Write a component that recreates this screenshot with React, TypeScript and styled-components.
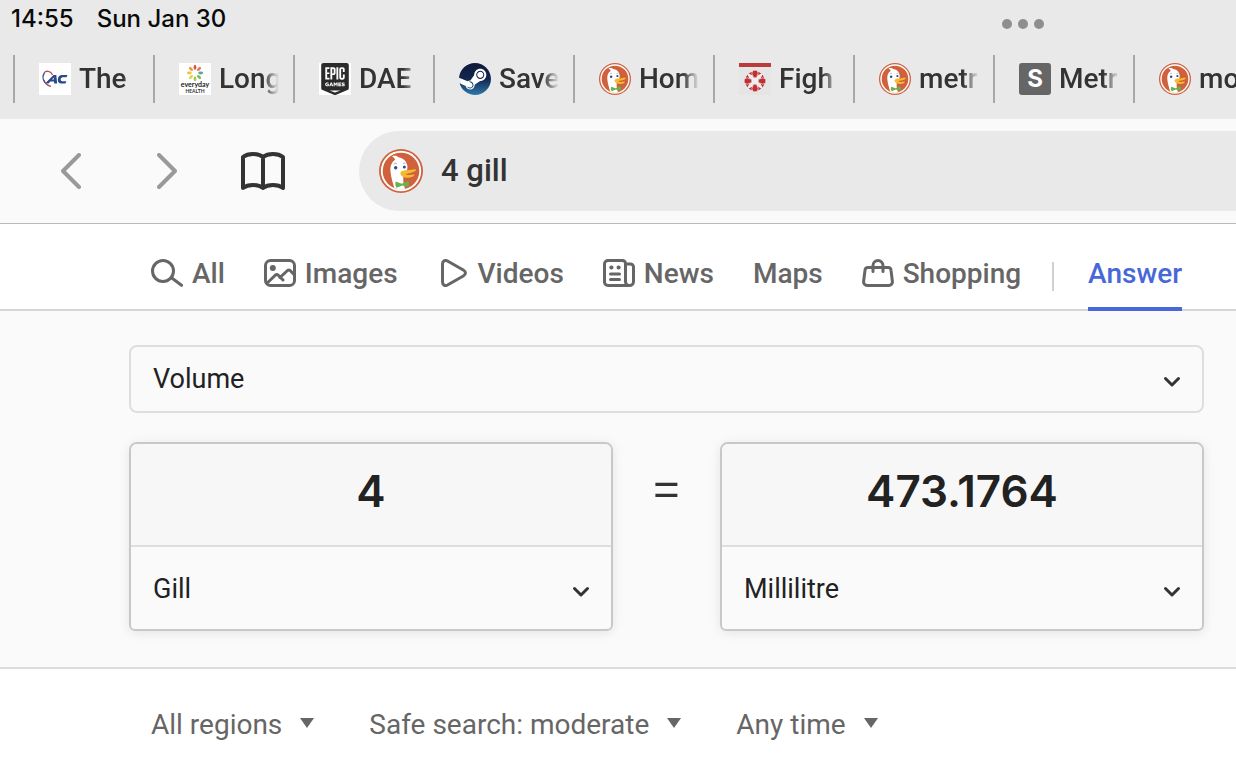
import React, { useId } from 'react';
import styled, { createGlobalStyle, css } from 'styled-components';
import { SiEpicgames, SiSteam } from 'react-icons/si';

const GlobalStyle = createGlobalStyle`
  *, *::before, *::after { box-sizing: border-box; }
  body {
    margin: 0;
    background: #fff;
    color: #333;
    font-family: Roboto, "Liberation Sans", sans-serif;
    overflow-x: hidden;
  }
  button, input, select { margin: 0; font: inherit; color: inherit; }
`;

/* ---------- Browser chrome ---------- */

const Header = styled.header`
  background: #e9e9e9;
  padding-bottom: 16px;
`;

const StatusBar = styled.div`
  display: flex;
  align-items: center;
  gap: 23px;
  height: 38px;
  margin-bottom: 17px;
  padding: 0 192px 0 11px;
  color: #0a0a0a;
  font: 500 24px/38px Inter, "Liberation Sans", sans-serif;
`;

const DotsButton = styled.button`
  display: flex;
  gap: 6px;
  margin-left: auto;
  padding: 10px 0 0;
  border: 0;
  background: none;
`;

const Dot = styled.span`
  width: 10px;
  height: 10px;
  border-radius: 50%;
  background: #8e8e8e;
`;

const TabStrip = styled.nav`
  display: flex;
  padding-left: 13px;
  overflow: hidden;
`;

const Tab = styled.a`
  display: flex;
  flex: 0 0 140px;
  min-width: 0;
  align-items: center;
  gap: 8px;
  height: 48px;
  padding: 0 14px 0 24px;
  border-left: 2px solid #a8a8a8;
  color: #333;
  font-size: 28px;
  font-weight: 500;
  text-decoration: none;

  svg { flex: none; }
`;

const TabTitle = styled.span`
  flex: 1;
  min-width: 0;
  overflow: hidden;
  line-height: 40px;
  white-space: nowrap;
  mask-image: linear-gradient(to right, #000 calc(100% - 16px), transparent);
`;

const Badge = styled.span<{ $bg: string; $radius?: number }>`
  display: flex;
  flex: none;
  align-items: center;
  justify-content: center;
  width: 32px;
  height: 32px;
  border-radius: ${p => p.$radius ?? 0}px;
  background: ${p => p.$bg};
  color: #fff;
  font: 700 24px/32px Inter, "Liberation Sans", sans-serif;
`;

const EpicMark = styled(SiEpicgames)`
  width: 32px;
  height: 32px;
  color: #2b2b2b;
`;

const SteamMark = styled(SiSteam)`
  width: 32px;
  height: 32px;
  && { fill: url(#steam-blue); }
`;

const Toolbar = styled.div`
  display: flex;
  align-items: center;
  height: 105px;
  padding-left: 23px;
  border-bottom: 1px solid #b9b9b9;
  background: #fafafa;
`;

const ToolButton = styled.button<{ $color: string }>`
  display: flex;
  flex: none;
  align-items: center;
  justify-content: center;
  width: 96px;
  height: 80px;
  padding: 0;
  border: 0;
  background: none;
  color: ${p => p.$color};
`;

const AddressBar = styled.label`
  display: flex;
  flex: 1;
  align-items: center;
  gap: 18px;
  height: 80px;
  margin-left: 48px;
  padding-left: 20px;
  border-radius: 40px 0 0 40px;
  background: #e9e9e9;
`;

const AddressInput = styled.input`
  flex: 1;
  min-width: 0;
  padding: 0;
  border: 0;
  outline: 0;
  background: none;
  font-size: 31px;
  font-weight: 500;
  line-height: 40px;
`;

/* ---------- Search page ---------- */

const SearchNav = styled.nav`
  display: flex;
  height: 87px;
  padding-left: 151px;
  border-bottom: 2px solid #d5d5d5;
  color: #666;
  font-size: 28px;
  font-weight: 500;
`;

const NavGroup = styled.div`
  display: flex;
  gap: 39px;
`;

const NavLink = styled.a<{ $active?: boolean }>`
  display: flex;
  align-items: center;
  gap: 9px;
  height: 87px;
  padding-top: 16px;
  border-bottom: 4px solid transparent;
  color: inherit;
  line-height: 40px;
  text-decoration: none;
  ${p => p.$active && css`
    border-color: #4867d9;
    color: #4867d9;
  `}

  svg { margin-bottom: 2px; }
`;

const NavRule = styled.span`
  width: 2px;
  height: 29px;
  margin: 38px 34px 0 31px;
  background: #d0d0d0;
`;

const Converter = styled.main`
  display: grid;
  gap: 29px;
  padding: 34px 32px 36px 129px;
  border-bottom: 2px solid #dcdcdc;
  background: #fafafa;
`;

const SelectShell = styled.label<{ $framed?: boolean }>`
  display: grid;
  grid-template-columns: 1fr auto;
  align-items: center;
  height: ${p => (p.$framed ? 68 : 82)}px;
  padding-top: ${p => (p.$framed ? 0 : 2)}px;
  border: ${p => (p.$framed ? '2px solid #dedede' : '0')};
  border-radius: 8px;

  svg {
    grid-area: 1 / 2;
    margin-right: 21px;
    pointer-events: none;
  }
`;

const Select = styled.select`
  grid-area: 1 / 1 / 2 / 3;
  width: 100%;
  height: 100%;
  padding: 0 44px 0 22px;
  appearance: none;
  border: 0;
  outline: 0;
  background: none;
  color: #222;
  font-size: 27px;
`;

const Equation = styled.div`
  display: grid;
  grid-template-columns: 1fr 107px 1fr;
`;

const UnitCard = styled.section`
  border: 2px solid #c8c8c8;
  border-radius: 8px 8px 6px 6px;
  box-shadow: 0 2px 12px rgba(0, 0, 0, 0.09);
  overflow: hidden;
`;

const ValueInput = styled.input`
  display: block;
  width: 100%;
  height: 103px;
  padding: 0 0 8px;
  border: 0;
  border-bottom: 2px solid #dedede;
  outline: 0;
  background: #f7f7f7;
  color: #222;
  font: 600 44px Inter, "Liberation Sans", sans-serif;
  text-align: center;
`;

const Equals = styled.span`
  color: #333;
  font: 300 54px/88px Inter, "Liberation Sans", sans-serif;
  text-align: center;
`;

const Filters = styled.div`
  display: flex;
  gap: 55px;
  padding: 37px 0 26px 151px;
  color: #666;
  font-size: 28px;
`;

const FilterShell = styled.label`
  display: grid;
  align-items: center;

  svg {
    grid-area: 1 / 1;
    justify-self: end;
    margin-bottom: 4px;
    pointer-events: none;
  }
`;

const FilterSelect = styled.select`
  grid-area: 1 / 1;
  height: 38px;
  padding: 0 32px 0 0;
  appearance: none;
  border: 0;
  outline: 0;
  background: none;
  line-height: 38px;
  field-sizing: content;
`;

/* ---------- Drawings ---------- */

function DuckLogo({ size }: { size: number }) {
  const clip = useId();
  return (
    <svg width={size} height={size} viewBox="0 0 44 44" aria-hidden="true">
      <clipPath id={clip}><circle cx="22" cy="22" r="18.5" /></clipPath>
      <circle cx="22" cy="22" r="22" fill="#d0613d" />
      <circle cx="22" cy="22" r="20.2" fill="#fff" />
      <circle cx="22" cy="22" r="18.3" fill="#d0613d" />
      <g clipPath={`url(#${clip})`}>
        <path d="M13 7.2c3-1 5.2-.2 6.800 1.200 4.700.5 8 4.200 8.600 8.600.4 3.500-.8 6.500-3.800 9.500-.9 4.500 0 9 2 15.500H16.200c-1.700-6-4-12.500-4.700-19-.4-5 .3-9.300 4.700-12.200-.7-1.500-1.700-2.600-3.200-3.600z" fill="#fff" />
        <path d="M21.300 24.200c.6-3 4.300-3 7.200-3 3.200 0 5.500-1.300 8.300-.9.900 1.400-2 2.700-4.700 3.400-2.500.7-5 .7-5.500 1.800 2.400 1 6 .2 8.700-.2.6 2.700-5 3.700-8.200 3.400-3-.4-5.600-1.800-5.800-4.500z" fill="#f5bb30" />
        <path d="M16.800 32.600l6 2.200 6.200-3c1.200 1.800 1.200 4.500.3 6.300l-6-1.700-5.800 2.300c-1.300-1.600-1.500-4.400-.7-6.100z" fill="#67b14f" />
        <circle cx="16.700" cy="18.800" r="1.700" fill="#2d4f8e" />
        <circle cx="25.300" cy="18" r="1.500" fill="#2d4f8e" />
        <path d="M14.800 15.300c.8-1 2-1.300 3-.8M24 14.800c.7-.7 1.600-.8 2.300-.3" stroke="#7b8bb0" strokeWidth=".8" fill="none" />
      </g>
    </svg>
  );
}

const AcLogo = () => (
  <svg width="32" height="32" viewBox="0 0 32 32" aria-hidden="true">
    <path fill="#fff" d="M0 0h32v32H0z" />
    <path d="M13.500 12C12 8 7 7 5 10M5 17c.8 3 2.800 5.500 7 6.300" fill="none" stroke="#b5505f" strokeWidth="1.300" />
    <path d="M5.500 10c-2 2.500-1.600 6.500.3 9.500" fill="none" stroke="#3d5694" strokeWidth="1.300" />
    <path d="M6 20.500L14.500 12h2.800l.9 8.500h-3l-.2-2h-3.600l-1.900 2zM13 16.500h1.800l-.1-2z" fill="#2b4a8c" />
    <path d="M28.500 12h-5.500c-2.500 0-4.200 2-4.200 4.800 0 2.500 1.200 3.700 3.400 3.700h4.200l1-2.300h-4.200c-1 0-1.500-.5-1.500-1.600 0-1.400.9-2.300 2.200-2.300h3.700z" fill="#2b4a8c" />
  </svg>
);

const petals = ['#d9534a', '#e9775a', '#5aa7a0', '#7fb857', '#a6c84c', '#d8d84a', '#f0c541', '#ee9a3c'];

const HealthLogo = () => (
  <svg width="32" height="32" viewBox="0 0 32 32" aria-hidden="true">
    <path fill="#fff" d="M0 0h32v32H0z" />
    {petals.map((c, i) => (
      <ellipse key={c} cx="16" cy="4.300" rx="1.400" ry="2.500" fill={c} transform={`rotate(${i * 45} 16 10)`} />
    ))}
    <text x="16" y="24" fontFamily="Lato, sans-serif" fontWeight="700" fontSize="7" textAnchor="middle" fill="#222">everyday</text>
    <text x="16" y="30" fontFamily="Lato, sans-serif" fontWeight="700" fontSize="5" textAnchor="middle" fill="#333">HEALTH</text>
  </svg>
);

const GearLogo = () => (
  <svg width="32" height="32" viewBox="0 0 32 32" aria-hidden="true">
    <path fill="#e5e5e5" d="M0 0h32v32H0z" />
    <path fill="#bb3a3a" d="M0 0h32v4H0z" />
    <circle cx="16" cy="18" r="9.800" fill="#c22f33" />
    {[0, 90, 180, 270].map(a => (
      <g key={a} transform={`rotate(${a} 16 18)`}>
        <path d="M16 18l3.200-5.200 4-2-2 4-5.200 3.200z" fill="#eee" stroke="#eee" strokeWidth="1.200" />
        <path d="M14 7.200h4l1.200 3-1.700 4.600h-3l-1.700-4.600z" fill="#c22f33" stroke="#eee" strokeWidth=".7" />
      </g>
    ))}
    <circle cx="16" cy="18" r="3.300" fill="#eee" />
  </svg>
);

const SteamLogo = () => (
  <Badge $bg="radial-gradient(circle, #fff 14px, transparent 15px)">
    <svg width="0" height="0" aria-hidden="true">
      <linearGradient id="steam-blue" x1="0" y1="0" x2="0" y2="1">
        <stop offset="0" stopColor="#10183a" />
        <stop offset=".5" stopColor="#13264f" />
        <stop offset="1" stopColor="#2f79ab" />
      </linearGradient>
    </svg>
    <SteamMark aria-hidden="true" />
  </Badge>
);

const Stroke = styled.svg.attrs({ fill: 'none', strokeLinecap: 'round', strokeLinejoin: 'round', 'aria-hidden': true })`
  stroke: currentColor;
`;

const BackIcon = () => <Stroke width="20" height="36" viewBox="0 0 20 36" strokeWidth="4"><path d="M18 2L2 18l16 16" /></Stroke>;
const ForwardIcon = () => <Stroke width="20" height="36" viewBox="0 0 20 36" strokeWidth="4"><path d="M2 2l16 16L2 34" /></Stroke>;
const BookIcon = () => (
  <Stroke width="44" height="38" viewBox="0 0 44 38" strokeWidth="4">
    <path d="M22 5C17 1 7 1 2 5v31c5-4 15-4 20 0 5-4 15-4 20 0V5C37 1 27 1 22 5zM22 5v31" />
  </Stroke>
);

const SearchIcon = () => (
  <Stroke width="32" height="28" viewBox="0 0 32 28" strokeWidth="3">
    <circle cx="12" cy="12" r="10.500" /><path d="M20.500 18.800l10 7.500" />
  </Stroke>
);
const ImagesIcon = () => (
  <Stroke width="32" height="28" viewBox="0 0 32 28" strokeWidth="3">
    <rect x="1.500" y="1.500" width="29" height="25" rx="5" />
    <circle cx="8.800" cy="9" r="3" fill="currentColor" stroke="none" />
    <path d="M3 24.300l8.500-8.300q1.200-1 2.500 0l5 5M16 18.500l7.500-7q1.300-1 2.600 0l4.400 4.500" />
  </Stroke>
);
const VideosIcon = () => (
  <Stroke width="32" height="28" viewBox="0 0 32 28" strokeWidth="3">
    <path d="M5.500 5v18c0 3 2.500 4.300 5 3l15.800-9c2.900-1.700 2.900-4.300 0-6L10.500 2c-2.500-1.300-5 0-5 3z" />
  </Stroke>
);
const NewsIcon = () => (
  <Stroke width="32" height="28" viewBox="0 0 32 28" strokeWidth="3">
    <path d="M22.500 5V4.500a3 3 0 0 0-3-3H5a3.500 3.500 0 0 0-3.500 3.500v18A3.500 3.500 0 0 0 5 26.500h21.500a4 4 0 0 0 4-4V8a3 3 0 0 0-3-3h-5v17a4 4 0 0 0 4 4.500" />
    <path d="M7.500 15h9M7.500 20.500h9" />
    <path d="M8.300 8.500h.2M15.500 8.500h.2" strokeWidth="4" />
  </Stroke>
);
const ShoppingIcon = () => (
  <Stroke width="32" height="28" viewBox="0 0 32 28" strokeWidth="3">
    <path d="M6 8.500h20a3 3 0 0 1 3 2.700l1.400 11.300a3.600 3.600 0 0 1-3.600 4H5.200a3.600 3.600 0 0 1-3.600-4L3 11.200a3 3 0 0 1 3-2.700z" />
    <path d="M11 12.500V6.500a5 5 0 0 1 10 0v6" />
  </Stroke>
);
const Chevron = () => (
  <Stroke width="18" height="18" viewBox="0 0 18 18" strokeWidth="3">
    <path d="M2.500 8.500L9 15l6.500-6.500" />
  </Stroke>
);
const Triangle = () => (
  <svg width="14" height="10" viewBox="0 0 14 10" aria-hidden="true"><path d="M0 0h14L7 10z" fill="#666" /></svg>
);

/* ---------- Data ---------- */

const tabs: { title: string; icon: React.ReactNode }[] = [
  { title: 'The', icon: <AcLogo /> },
  { title: 'Long', icon: <HealthLogo /> },
  { title: 'DAE', icon: <Badge $bg="#fff"><EpicMark aria-hidden="true" /></Badge> },
  { title: 'Save', icon: <SteamLogo /> },
  { title: 'Hom', icon: <DuckLogo size={32} /> },
  { title: 'Figh', icon: <GearLogo /> },
  { title: 'metr', icon: <DuckLogo size={32} /> },
  { title: 'Metr', icon: <Badge $bg="#666" $radius={3}>S</Badge> },
  { title: 'mo', icon: <DuckLogo size={32} /> },
];

const sections: { label: string; icon?: React.ReactNode }[] = [
  { label: 'All', icon: <SearchIcon /> },
  { label: 'Images', icon: <ImagesIcon /> },
  { label: 'Videos', icon: <VideosIcon /> },
  { label: 'News', icon: <NewsIcon /> },
  { label: 'Maps' },
  { label: 'Shopping', icon: <ShoppingIcon /> },
];

const filters = [
  { name: 'Region', value: 'All regions' },
  { name: 'Safe search', value: 'Safe search: moderate' },
  { name: 'Time', value: 'Any time' },
];

function UnitSelect({ name, value, framed }: { name: string; value: string; framed?: boolean }) {
  return (
    <SelectShell $framed={framed}>
      <Select aria-label={name} defaultValue={value}><option>{value}</option></Select>
      <Chevron />
    </SelectShell>
  );
}

function Unit({ name, amount, unit }: { name: string; amount: string; unit: string }) {
  return (
    <UnitCard>
      <ValueInput type="text" inputMode="decimal" aria-label={`${name} value`} defaultValue={amount} />
      <UnitSelect name={`${name} unit`} value={unit} />
    </UnitCard>
  );
}

export default function App() {
  return (
    <>
      <GlobalStyle />
      <Header>
        <StatusBar>
          <span>14:55</span>
          <span>Sun Jan 30</span>
          <DotsButton type="button" aria-label="Multitasking"><Dot /><Dot /><Dot /></DotsButton>
        </StatusBar>
        <TabStrip aria-label="Open tabs">
          {tabs.map(t => <Tab key={t.title} href="#">{t.icon}<TabTitle>{t.title}</TabTitle></Tab>)}
        </TabStrip>
      </Header>
      <Toolbar>
        <ToolButton type="button" $color="#999" aria-label="Back"><BackIcon /></ToolButton>
        <ToolButton type="button" $color="#999" aria-label="Forward"><ForwardIcon /></ToolButton>
        <ToolButton type="button" $color="#333" aria-label="Reading list"><BookIcon /></ToolButton>
        <AddressBar>
          <DuckLogo size={44} />
          <AddressInput type="text" aria-label="Search or enter address" defaultValue="4 gill" />
        </AddressBar>
      </Toolbar>
      <SearchNav aria-label="Search sections">
        <NavGroup>
          {sections.map(s => <NavLink key={s.label} href="#">{s.icon}{s.label}</NavLink>)}
        </NavGroup>
        <NavRule />
        <NavLink href="#" $active aria-current="page">Answer</NavLink>
      </SearchNav>
      <Converter>
        <UnitSelect name="Quantity" value="Volume" framed />
        <Equation>
          <Unit name="From" amount="4" unit="Gill" />
          <Equals>=</Equals>
          <Unit name="To" amount="473.1764" unit="Millilitre" />
        </Equation>
      </Converter>
      <Filters>
        {filters.map(f => (
          <FilterShell key={f.name}>
            <FilterSelect aria-label={f.name} defaultValue={f.value}><option>{f.value}</option></FilterSelect>
            <Triangle />
          </FilterShell>
        ))}
      </Filters>
    </>
  );
}
